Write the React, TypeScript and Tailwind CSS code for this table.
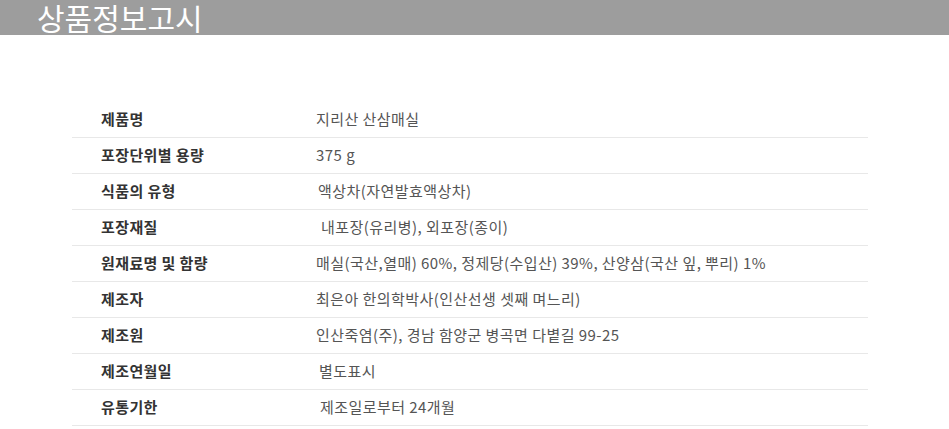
const rows = [
  { label: '제품명', value: '지리산 산삼매실', pad: 'pl-0' },
  { label: '포장단위별 용량', value: '375 g', pad: 'pl-0' },
  { label: '식품의 유형', value: '액상차(자연발효액상차)', pad: 'pl-[2px]' },
  { label: '포장재질', value: '내포장(유리병), 외포장(종이)', pad: 'pl-[5px]' },
  { label: '원재료명 및 함량', value: '매실(국산,열매) 60%, 정제당(수입산) 39%, 산양삼(국산 잎, 뿌리) 1%', pad: 'pl-0' },
  { label: '제조자', value: '최은아 한의학박사(인산선생 셋째 며느리)', pad: 'pl-0' },
  { label: '제조원', value: '인산죽염(주), 경남 함양군 병곡면 다볕길 99-25', pad: 'pl-0' },
  { label: '제조연월일', value: '별도표시', pad: 'pl-[3px]' },
  { label: '유통기한', value: '제조일로부터 24개월', pad: 'pl-[4px]' },
];

export default function App() {
  return (
    <div className="w-[949px] h-[429px] bg-white overflow-hidden font-['Noto_Sans_CJK_KR','Noto_Sans',sans-serif]">
      {/* Header */}
      <div className="h-[35px] bg-[#9d9d9d] flex items-center pl-[37px]">
        <h1 className="text-[30px] leading-[35px] text-white">상품정보고시</h1>
      </div>

      {/* Table */}
      <div className="ml-[72px] w-[796px] mt-[67px]">
        {rows.map((r) => (
          <div key={r.label} className="flex h-[36px] items-center border-b border-[#e8e8e8]">
            <div className="w-[244px] pl-[29px] text-[15px] tracking-[0.4px] font-bold text-[#333]">{r.label}</div>
            <div className={`text-[15px] tracking-[0.45px] text-[#555] ${r.pad}`}>{r.value}</div>
          </div>
        ))}
      </div>
    </div>
  );
}
